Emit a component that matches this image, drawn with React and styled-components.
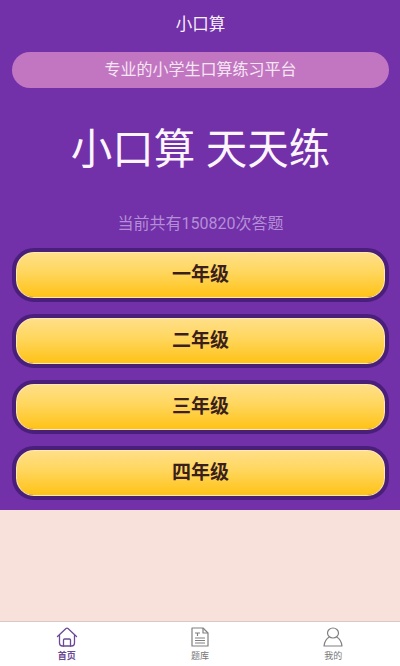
import styled, { createGlobalStyle } from "styled-components"

const GlobalStyle = createGlobalStyle`
  html, body {
    margin: 0;
    padding: 0;
    height: 100%;
  }
  body {
    font-family: "Roboto", "Noto Sans CJK SC", sans-serif;
  }
`

const grades = ["一年级", "二年级", "三年级", "四年级"]

const HomeIcon = () => (
  <svg width="22" height="20" viewBox="0 0 22 20" fill="none" stroke="#6a4a94" strokeWidth="1.3" strokeLinejoin="round" strokeLinecap="round">
    <path d="M1.5 9.5 10 1.6a1.5 1.5 0 0 1 2 0l8.500 7.900" />
    <path d="M3.500 8.500v7.500a3 3 0 0 0 3 3h9a3 3 0 0 0 3-3V8.500" />
    <path d="M7.500 19v-6a1 1 0 0 1 1-1h5a1 1 0 0 1 1 1v6" />
  </svg>
)

const NoteIcon = () => (
  <svg width="18" height="20" viewBox="0 0 18 20" fill="none" stroke="#808080" strokeWidth="1.200" strokeLinejoin="round">
    <path d="M1 1h11l5 5v13H1z" />
    <path d="M12 1v5h5" />
    <path d="M4 6h5M6.500 6v3M4 11h10M4 13.500h10M4 16h10" />
  </svg>
)

const UserIcon = () => (
  <svg width="20" height="20" viewBox="0 0 20 20" fill="none" stroke="#808080" strokeWidth="1.200" strokeLinejoin="round">
    <ellipse cx="10" cy="6" rx="5.500" ry="5" />
    <path d="M6.500 10C3.500 11.500 1.500 15 1 19h18c-.5-4-2.500-7.500-5.500-9" />
  </svg>
)

const App = () => {
  return (
    <>
      <GlobalStyle />
      <Page>
        <Hero>
          <TopBar>小口算</TopBar>
          <Banner>专业的小学生口算练习平台</Banner>
          <Title>小口算 天天练</Title>
          <Counter>当前共有150820次答题</Counter>
          <GradeList>
            {grades.map((g) => (
              <GradeButton key={g}>{g}</GradeButton>
            ))}
          </GradeList>
        </Hero>
        <Filler />
        <TabBar>
          <Tab>
            <HomeIcon />
            <TabLabel $active>首页</TabLabel>
          </Tab>
          <Tab>
            <NoteIcon />
            <TabLabel>题库</TabLabel>
          </Tab>
          <Tab>
            <UserIcon />
            <TabLabel>我的</TabLabel>
          </Tab>
        </TabBar>
      </Page>
    </>
  )
}

export default App

const Page = styled.div`
  width: 400px;
  height: 666px;
  display: flex;
  flex-direction: column;
  overflow: hidden;
  background: #fff;
`

const Hero = styled.div`
  height: 510px;
  flex: none;
  background: #7230a9;
  display: flex;
  flex-direction: column;
  align-items: center;
  box-sizing: border-box;
  padding: 0 11px 0 12px;
`

const TopBar = styled.div`
  height: 49px;
  line-height: 49px;
  font-size: 16.500px;
  color: #f8f0fa;
`

const Banner = styled.div`
  width: 100%;
  height: 36px;
  margin-top: 3px;
  border-radius: 18px;
  background: #c276c2;
  color: #f6e6f4;
  font-size: 16px;
  line-height: 35px;
  text-align: center;
`

const Title = styled.h1`
  margin: 31px 0 0;
  height: 62px;
  line-height: 62px;
  font-size: 41.500px;
  font-weight: 400;
  color: #fdf5fc;
  white-space: nowrap;
`

const Counter = styled.div`
  margin-top: 33px;
  height: 20px;
  line-height: 20px;
  font-size: 16px;
  color: #b48ed6;
`

const GradeList = styled.div`
  width: 100%;
  margin-top: 14px;
  display: flex;
  flex-direction: column;
  gap: 12px;
`

const GradeButton = styled.div`
  height: 54px;
  box-sizing: border-box;
  border: 4px solid #4a1f7c;
  border-radius: 22px;
  background: linear-gradient(180deg, #ffe08a 0%, #ffd65c 45%, #ffc114 100%);
  box-shadow: inset 0 0 0 1px #ffe9b0, inset 0 -1px 0 #4a1a3c;
  color: #3a1f1c;
  font-size: 19px;
  font-weight: 700;
  line-height: 46px;
  text-align: center;
`

const Filler = styled.div`
  flex: 1;
  background: #f8e1db;
`

const TabBar = styled.div`
  height: 44px;
  flex: none;
  border-top: 1px solid #d8c8c6;
  background: #fff;
  display: flex;
`

const Tab = styled.div`
  flex: 1;
  display: flex;
  flex-direction: column;
  align-items: center;
  padding-top: 5px;
  gap: 3px;
`

const TabLabel = styled.span`
  font-size: 9px;
  line-height: 12px;
  color: ${(p) => (p.$active ? "#6a4a94" : "#777")};
  font-weight: ${(p) => (p.$active ? 700 : 400)};
`
